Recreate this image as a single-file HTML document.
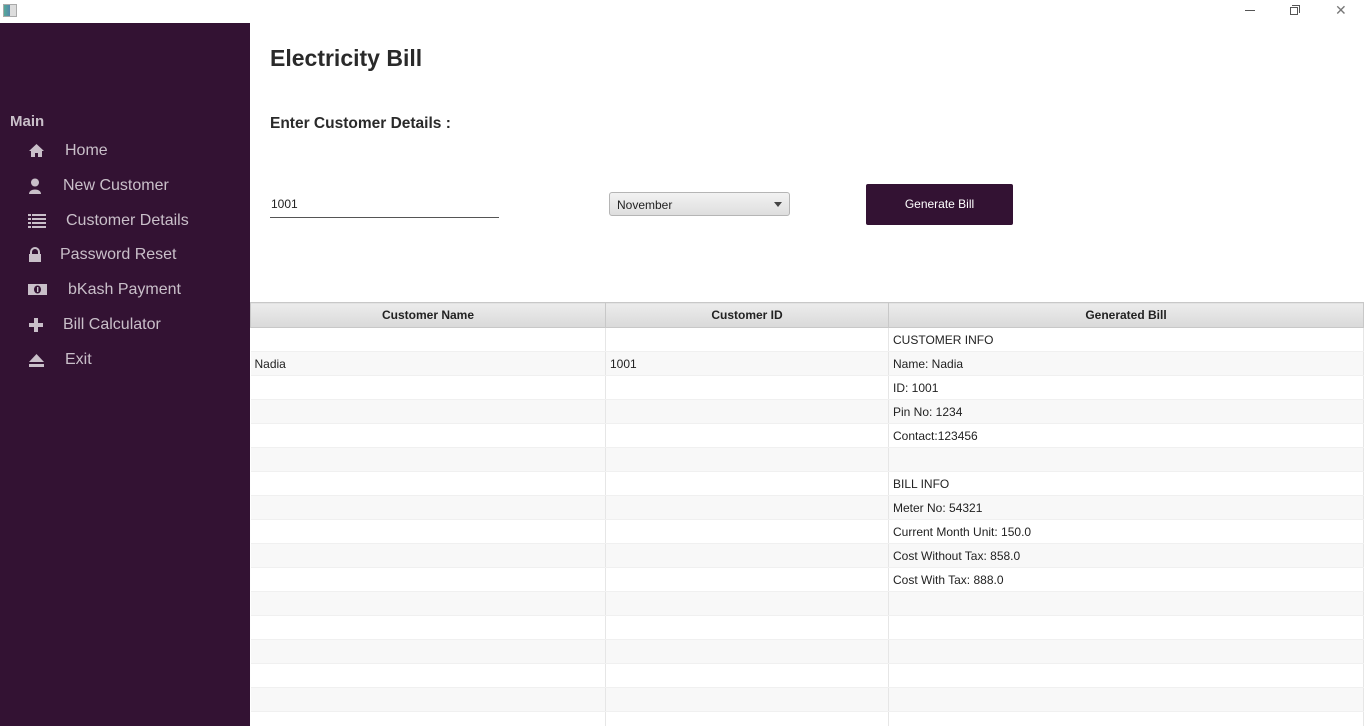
<!DOCTYPE html>
<html><head><meta charset="utf-8"><style>
*{margin:0;padding:0;box-sizing:border-box}
html,body{width:1365px;height:726px;overflow:hidden}
body{background:#fff;font-family:"Liberation Sans",sans-serif;position:relative}
.abs{position:absolute}
#side{left:0;top:23px;width:250px;height:703px;background:#331233}
.nav{position:absolute;color:#c9bfc9;font-size:16px;left:0}
.nav svg{position:absolute;left:28px;top:0px}
.nav span{position:absolute;white-space:nowrap;top:-1px}
table{position:absolute;left:250px;top:302px;border-collapse:collapse;width:1114px;font-size:12px;color:#222;table-layout:fixed}
th{height:25px;background:linear-gradient(#ececec,#d9d9d9);border:1px solid #c8c8c8;font-weight:bold;font-size:12px;padding:0}
td{height:24px;border-right:1px solid #e6e6e6;border-bottom:1px solid #f0f0f0;padding:0 0 0 4px;white-space:nowrap;line-height:22px}
tr:nth-child(odd) td{background:#f8f8f8}
</style></head><body>
<div class="abs" style="left:3px;top:4px;width:14px;height:13px;border:1px solid #aaa;background:linear-gradient(90deg,#5a9 0,#58a 50%,#ddd 50%)"></div>
<div class="abs" style="left:1245px;top:10px;width:10px;height:1px;background:#555"></div>
<div class="abs" style="left:1290px;top:7px;width:8px;height:8px;border:1px solid #555"></div>
<div class="abs" style="left:1292px;top:5px;width:8px;height:8px;border-top:1px solid #555;border-right:1px solid #555"></div>
<div class="abs" style="left:1335px;top:2px;font-size:14px;color:#777">✕</div>
<div id="side" class="abs">
<div class="abs" style="left:10px;top:90px;color:#c9bfc9;font-weight:bold;font-size:15px">Main</div>
<div class="nav" style="top:120px"><svg width="17" height="15" viewBox="0 0 17 15"><path d="M8.5 1L1 8h2v6h4v-4h3v4h4V8h2z" fill="#c9bfc9"/></svg><span style="left:65px">Home</span></div>
<div class="nav" style="top:155px"><svg width="16" height="16" viewBox="0 0 16 16"><circle cx="7" cy="4.5" r="4" fill="#c9bfc9"/><path d="M1 16c0-6 12-6 12 0z" fill="#c9bfc9"/></svg><span style="left:63px">New Customer</span></div>
<div class="nav" style="top:190px"><svg width="18" height="16" viewBox="0 0 18 16"><path d="M0 1h3v2H0zM4 1h14v2H4zM0 5h3v2H0zM4 5h14v2H4zM0 9h3v2H0zM4 9h14v2H4zM0 13h3v2H0zM4 13h14v2H4z" fill="#c9bfc9"/></svg><span style="left:66px">Customer Details</span></div>
<div class="nav" style="top:224px"><svg width="14" height="16" viewBox="0 0 14 16"><path d="M3 7V5a4 4 0 018 0v2" stroke="#c9bfc9" stroke-width="2" fill="none"/><rect x="1" y="7" width="12" height="8" fill="#c9bfc9"/></svg><span style="left:60px">Password Reset</span></div>
<div class="nav" style="top:259px"><svg width="20" height="16" viewBox="0 0 20 16"><rect x="0" y="2" width="19" height="11" fill="#c9bfc9"/><ellipse cx="9.5" cy="7.5" rx="3.5" ry="4" fill="#331233"/><rect x="9" y="5" width="1.4" height="5" fill="#c9bfc9"/></svg><span style="left:68px">bKash Payment</span></div>
<div class="nav" style="top:294px"><svg width="16" height="16" viewBox="0 0 16 16"><path d="M6 1h4v5h5v4h-5v5H6v-5H1V6h5z" fill="#c9bfc9"/></svg><span style="left:63px">Bill Calculator</span></div>
<div class="nav" style="top:329px"><svg width="17" height="16" viewBox="0 0 17 16"><path d="M8.5 2L1 10h15z M1 12h15v3H1z" fill="#c9bfc9"/></svg><span style="left:65px">Exit</span></div>
</div>
<div class="abs" style="left:270px;top:45px;font-size:23px;font-weight:bold;color:#2a2a2a">Electricity Bill</div>
<div class="abs" style="left:270px;top:115px;font-size:15.5px;font-weight:bold;color:#2a2a2a">Enter Customer Details :</div>
<div class="abs" style="left:271px;top:197px;font-size:12px;color:#222">1001</div>
<div class="abs" style="left:270px;top:217px;width:229px;height:1px;background:#555"></div>
<div class="abs" style="left:609px;top:192px;width:181px;height:24px;border:1px solid #b5b5b5;border-radius:3px;background:linear-gradient(#f2f2f2,#dedede);font-size:12px;color:#222;padding:5px 0 0 7px">November<div class="abs" style="left:164px;top:9px;border-left:4px solid transparent;border-right:4px solid transparent;border-top:5px solid #444"></div></div>
<div class="abs" style="left:866px;top:184px;width:147px;height:41px;background:#331233;border-radius:2px;color:#fff;font-size:12px;text-align:center;line-height:41px">Generate Bill</div>
<table>
<colgroup><col style="width:355px"><col style="width:283px"><col></colgroup>
<tr><th>Customer Name</th><th>Customer ID</th><th>Generated Bill</th></tr>
<tr><td></td><td></td><td>CUSTOMER INFO</td></tr>
<tr><td>Nadia</td><td>1001</td><td>Name: Nadia</td></tr>
<tr><td></td><td></td><td>ID: 1001</td></tr>
<tr><td></td><td></td><td>Pin No: 1234</td></tr>
<tr><td></td><td></td><td>Contact:123456</td></tr>
<tr><td></td><td></td><td></td></tr>
<tr><td></td><td></td><td>BILL INFO</td></tr>
<tr><td></td><td></td><td>Meter No: 54321</td></tr>
<tr><td></td><td></td><td>Current Month Unit: 150.0</td></tr>
<tr><td></td><td></td><td>Cost Without Tax: 858.0</td></tr>
<tr><td></td><td></td><td>Cost With Tax: 888.0</td></tr>
<tr><td></td><td></td><td></td></tr>
<tr><td></td><td></td><td></td></tr>
<tr><td></td><td></td><td></td></tr>
<tr><td></td><td></td><td></td></tr>
<tr><td></td><td></td><td></td></tr>
<tr><td></td><td></td><td></td></tr>
</table>
</body></html>
